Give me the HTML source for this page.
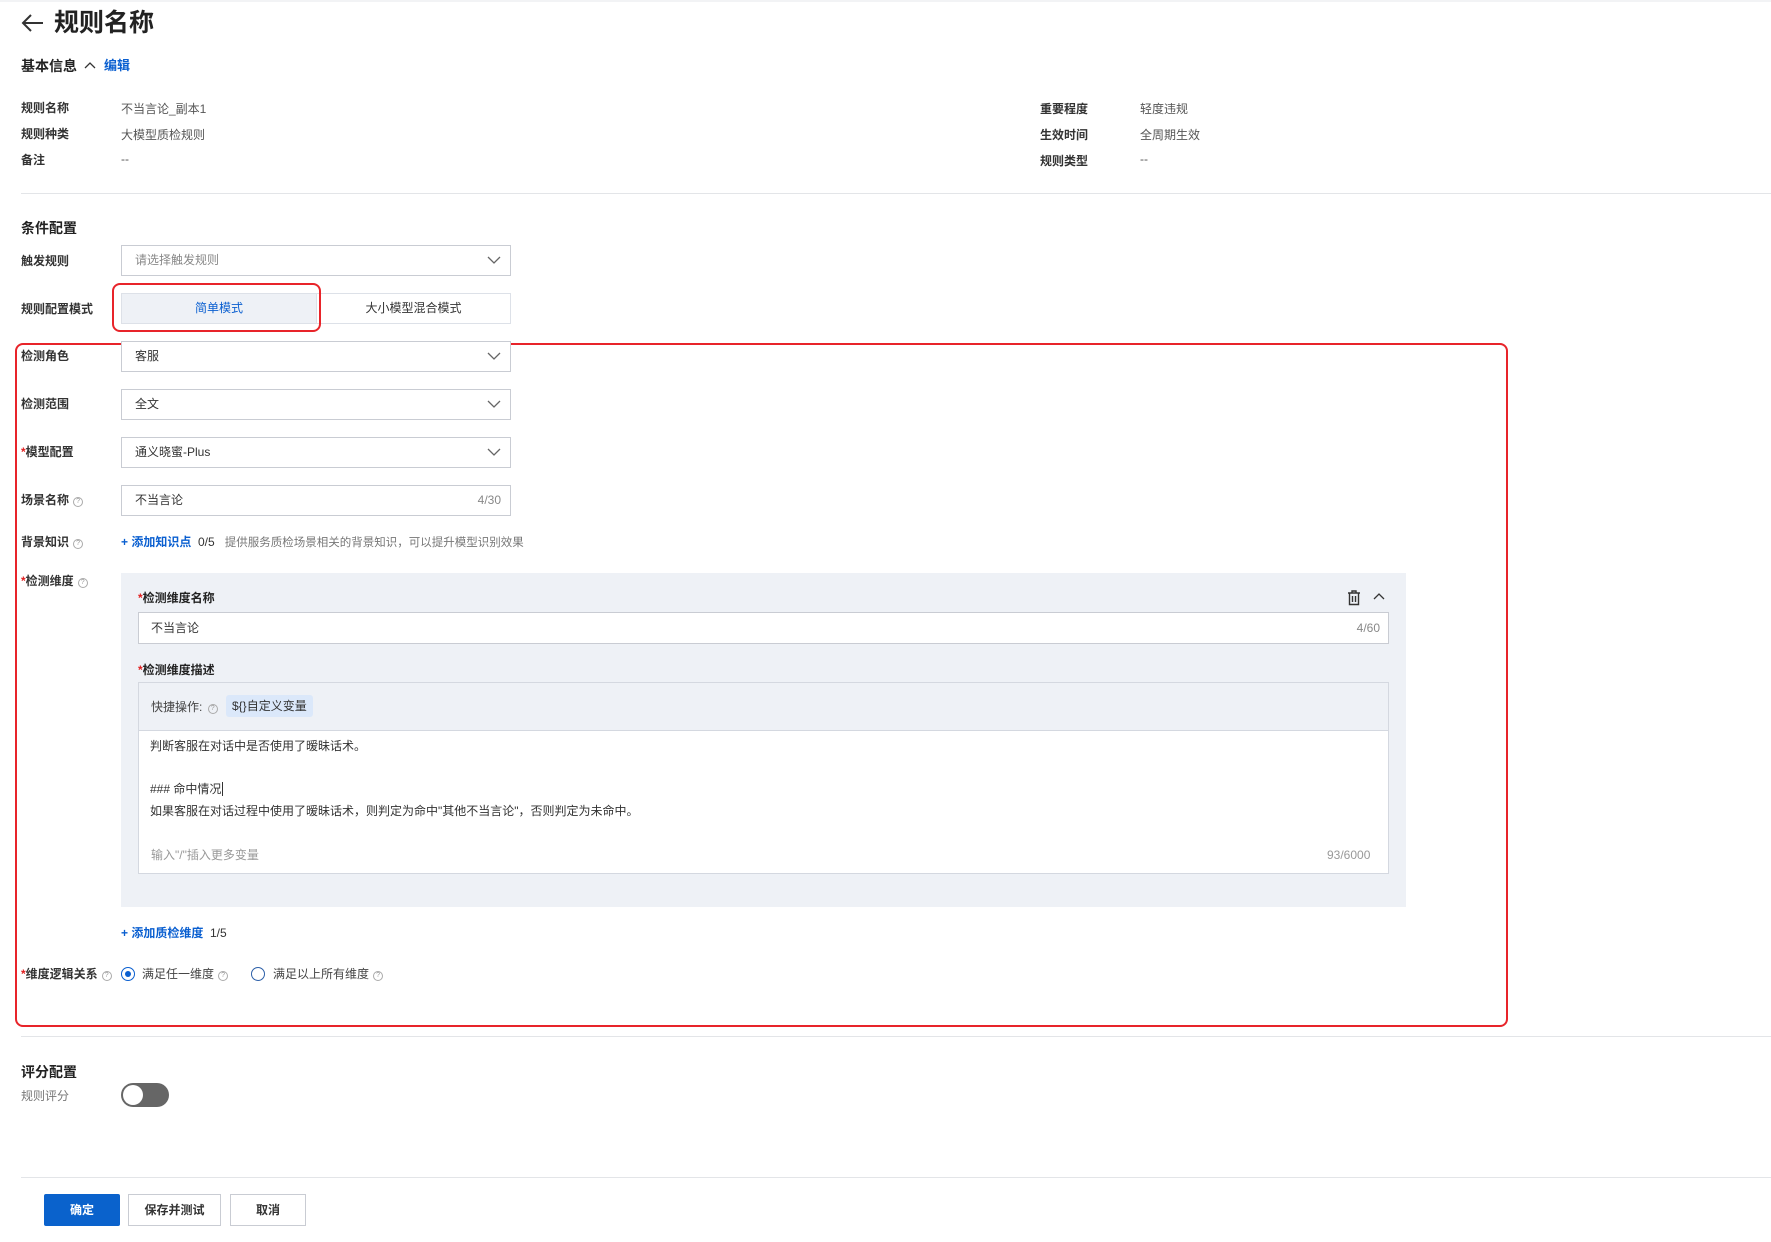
<!DOCTYPE html>
<html><head><meta charset="utf-8"><style>
*{box-sizing:border-box;margin:0;padding:0}
body{width:1771px;height:1242px;background:#fff;font-family:"Liberation Sans","Noto Sans CJK SC",sans-serif;color:#333;font-size:12px;position:relative;overflow:hidden}
.a{position:absolute;white-space:nowrap}
.lbl{position:absolute;left:21px;font-size:12px;color:#333;line-height:16px;font-weight:600}
.val{color:#555}
.sel{position:absolute;left:121px;width:390px;height:31px;border:1px solid #c9ccd3;background:#fff;padding:0 13px;line-height:29px;font-size:12px;color:#333}
.sel svg{position:absolute;right:9px;top:9px}
.req{color:#e02020}
.q{display:inline-block;width:10px;height:10px;border:1px solid #aaa;border-radius:50%;font-size:7px;line-height:8px;text-align:center;color:#999;vertical-align:1px;margin-left:4px;font-weight:400}
.hr{position:absolute;left:21px;right:0;height:1px;background:#e3e5e8}
</style></head><body>
<div class="a" style="left:0;top:0;width:1771px;height:2px;background:#f2f3f5"></div>
<svg class="a" style="left:21px;top:13px" width="24" height="20" viewBox="0 0 24 20"><path d="M22 10H3M10 2L2 10l8 8" fill="none" stroke="#333" stroke-width="2"/></svg>
<div class="a" style="left:54px;top:7px;font-size:25px;color:#222;line-height:32px;font-weight:600">规则名称</div>
<div class="a" style="left:21px;top:57px;font-size:14px;color:#222;line-height:18px;font-weight:600">基本信息</div>
<svg class="a" style="left:84px;top:61px" width="12" height="8"><path d="M1 7l5-5 5 5" fill="none" stroke="#333" stroke-width="1.3"/></svg>
<div class="a" style="left:104px;top:57px;font-size:13px;color:#0a5fd0;line-height:18px;font-weight:600">编辑</div>

<div class="lbl" style="top:100px">规则名称</div><div class="a val" style="left:121px;top:100px">不当言论_副本1</div>
<div class="lbl" style="top:126px">规则种类</div><div class="a val" style="left:121px;top:126px">大模型质检规则</div>
<div class="lbl" style="top:152px">备注</div><div class="a val" style="left:121px;top:152px">--</div>
<div class="a" style="left:1040px;top:100px;font-weight:600">重要程度</div><div class="a val" style="left:1140px;top:100px">轻度违规</div>
<div class="a" style="left:1040px;top:126px;font-weight:600">生效时间</div><div class="a val" style="left:1140px;top:126px">全周期生效</div>
<div class="a" style="left:1040px;top:152px;font-weight:600">规则类型</div><div class="a val" style="left:1140px;top:152px">--</div>
<div class="hr" style="top:193px"></div>

<div class="a" style="left:21px;top:218px;font-size:14px;color:#222;font-weight:600">条件配置</div>
<div class="lbl" style="top:253px">触发规则</div>
<div class="sel" style="top:245px;color:#888">请选择触发规则<svg width="14" height="10"><path d="M1 2l6 6 6-6" fill="none" stroke="#666" stroke-width="1.3"/></svg></div>
<div class="lbl" style="top:301px">规则配置模式</div>
<div class="a" style="left:121px;top:293px;width:196px;height:31px;background:#eef1f6;border:1px solid #dde1e8;color:#0a5fd0;text-align:center;line-height:29px">简单模式</div>
<div class="a" style="left:317px;top:293px;width:194px;height:31px;border:1px solid #dde1e8;border-left:none;text-align:center;line-height:29px">大小模型混合模式</div>
<div class="a" style="left:112px;top:283px;width:209px;height:49px;border:2px solid #e8242a;border-radius:8px"></div>

<div class="a" style="left:15px;top:343px;width:1493px;height:684px;border:2px solid #e8242a;border-radius:8px"></div>

<div class="lbl" style="top:348px">检测角色</div>
<div class="sel" style="top:341px">客服<svg width="14" height="10"><path d="M1 2l6 6 6-6" fill="none" stroke="#666" stroke-width="1.3"/></svg></div>
<div class="lbl" style="top:396px">检测范围</div>
<div class="sel" style="top:389px">全文<svg width="14" height="10"><path d="M1 2l6 6 6-6" fill="none" stroke="#666" stroke-width="1.3"/></svg></div>
<div class="lbl" style="top:444px"><span class="req">*</span>模型配置</div>
<div class="sel" style="top:437px">通义晓蜜-Plus<svg width="14" height="10"><path d="M1 2l6 6 6-6" fill="none" stroke="#666" stroke-width="1.3"/></svg></div>
<div class="lbl" style="top:492px">场景名称<span class="q">?</span></div>
<div class="sel" style="top:485px">不当言论<span style="position:absolute;right:9px;color:#888">4/30</span></div>
<div class="lbl" style="top:534px">背景知识<span class="q">?</span></div>
<div class="a" style="left:121px;top:534px;line-height:16px"><span style="color:#0a5fd0;font-weight:600">+ 添加知识点</span>&nbsp; 0/5 &nbsp; <span style="color:#777;font-size:11.5px">提供服务质检场景相关的背景知识，可以提升模型识别效果</span></div>
<div class="lbl" style="top:573px"><span class="req">*</span>检测维度<span class="q">?</span></div>

<div class="a" style="left:121px;top:573px;width:1285px;height:334px;background:#eef1f6"></div>
<div class="a" style="left:138px;top:589px;color:#222;font-weight:600"><span class="req">*</span>检测维度名称</div>
<svg class="a" style="left:1346px;top:589px" width="16" height="17"><path d="M2 4h12M6 4V2h4v2M3.5 4.5v11h9v-11M6.5 7v6M9.5 7v6" fill="none" stroke="#333" stroke-width="1.4"/></svg>
<svg class="a" style="left:1373px;top:592px" width="12" height="8"><path d="M1 7l5-5 5 5" fill="none" stroke="#333" stroke-width="1.3"/></svg>
<div class="a" style="left:138px;top:612px;width:1251px;height:32px;background:#fff;border:1px solid #c9ccd3;padding:0 12px;line-height:30px">不当言论<span style="position:absolute;right:8px;color:#888">4/60</span></div>
<div class="a" style="left:138px;top:661px;color:#222;font-weight:600"><span class="req">*</span>检测维度描述</div>
<div class="a" style="left:138px;top:682px;width:1251px;height:192px;background:#fff;border:1px solid #d4d8e0"></div>
<div class="a" style="left:139px;top:683px;width:1249px;height:48px;background:#eef1f6;border-bottom:1px solid #d4d8e0"></div>
<div class="a" style="left:151px;top:698px;color:#444">快捷操作: <span class="q" style="margin-left:2px">?</span></div>
<div class="a" style="left:226px;top:695px;height:22px;padding:0 6px;background:#dbe8fa;border-radius:3px;line-height:22px;color:#333">${}自定义变量</div>
<div class="a" style="left:150px;top:738px;line-height:16px">判断客服在对话中是否使用了暧昧话术。</div>
<div class="a" style="left:150px;top:781px;line-height:16px">### 命中情况<span style="border-left:1px solid #333;margin-left:1px"></span></div>
<div class="a" style="left:150px;top:803px;line-height:16px">如果客服在对话过程中使用了暧昧话术，则判定为命中"其他不当言论"，否则判定为未命中。</div>
<div class="a" style="left:151px;top:847px;line-height:16px;color:#999">输入"/"插入更多变量</div>
<div class="a" style="left:1327px;top:847px;line-height:16px;color:#999">93/6000</div>

<div class="a" style="left:121px;top:925px;line-height:16px"><span style="color:#0a5fd0;font-weight:600">+ 添加质检维度</span>&nbsp; 1/5</div>
<div class="lbl" style="top:966px"><span class="req">*</span>维度逻辑关系<span class="q">?</span></div>
<div class="a" style="left:121px;top:967px;width:14px;height:14px;border:1.5px solid #0a5fd0;border-radius:50%"><div style="position:absolute;left:2.5px;top:2.5px;width:6px;height:6px;border-radius:50%;background:#0a5fd0"></div></div>
<div class="a" style="left:142px;top:966px;color:#444;line-height:16px">满足任一维度<span class="q">?</span></div>
<div class="a" style="left:251px;top:967px;width:14px;height:14px;border:1.5px solid #2c5fa8;border-radius:50%"></div>
<div class="a" style="left:273px;top:966px;color:#444;line-height:16px">满足以上所有维度<span class="q">?</span></div>

<div class="hr" style="top:1036px"></div>
<div class="a" style="left:21px;top:1062px;font-size:14px;color:#222;font-weight:600">评分配置</div>
<div class="a" style="left:21px;top:1087px;color:#777">规则评分</div>
<div class="a" style="left:121px;top:1083px;width:48px;height:24px;border-radius:12px;background:#666"><div style="position:absolute;left:2px;top:2px;width:20px;height:20px;border-radius:50%;background:#fff"></div></div>

<div class="hr" style="top:1177px"></div>
<div class="a" style="left:44px;top:1194px;width:76px;height:32px;background:#0a62cc;color:#fff;text-align:center;line-height:32px;border-radius:2px;font-weight:600">确定</div>
<div class="a" style="left:128px;top:1194px;width:93px;height:32px;border:1px solid #c9ccd3;text-align:center;line-height:30px;font-weight:600">保存并测试</div>
<div class="a" style="left:230px;top:1194px;width:76px;height:32px;border:1px solid #c9ccd3;text-align:center;line-height:30px;font-weight:600">取消</div>
</body></html>
